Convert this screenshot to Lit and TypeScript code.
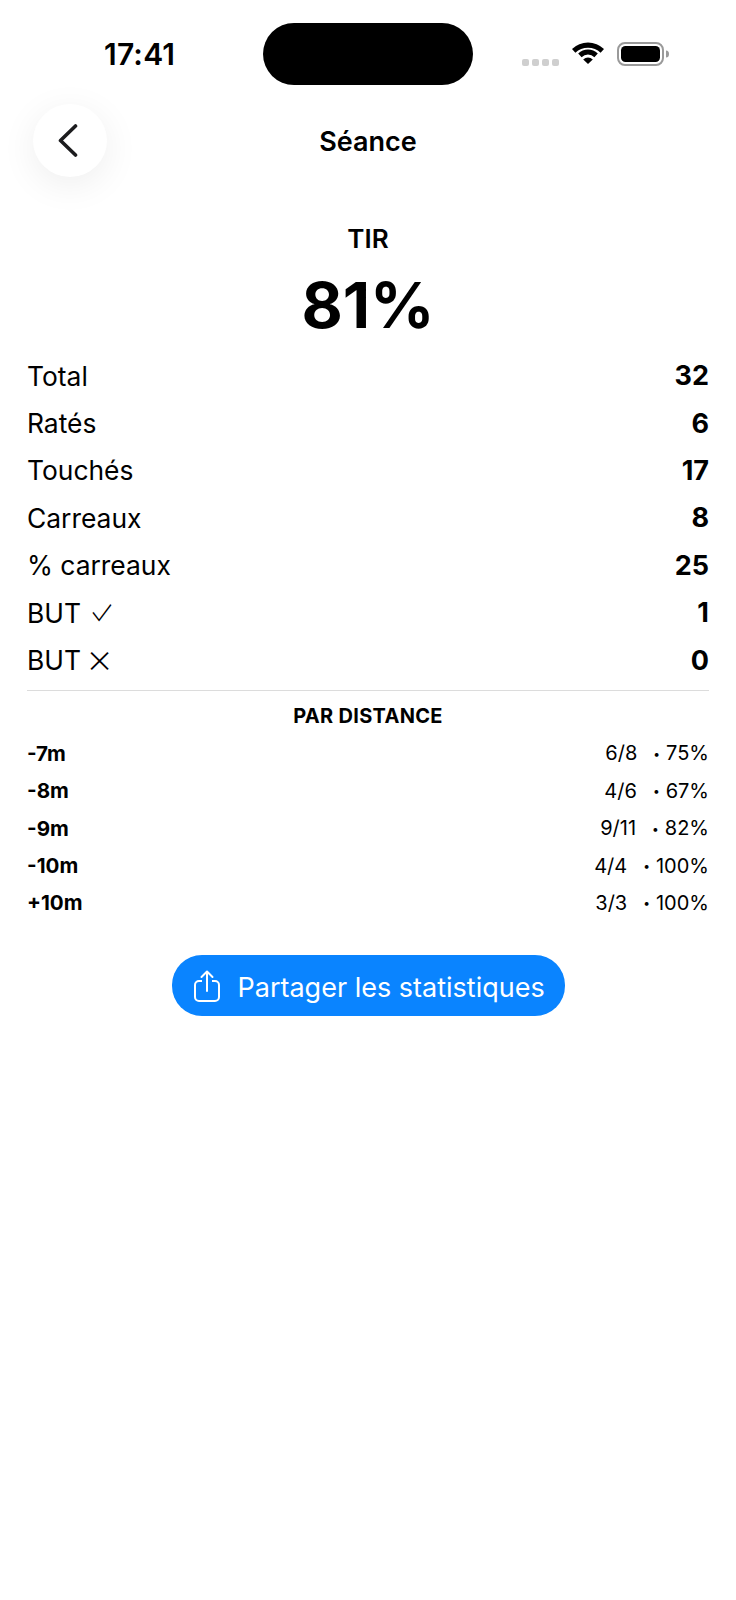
import { LitElement, html, css, svg } from "lit";
import { customElement } from "lit/decorators.js";

const stats: [string, string, string][] = [
  ["Total", "", "32"],
  ["Ratés", "", "6"],
  ["Touchés", "", "17"],
  ["Carreaux", "", "8"],
  ["% carreaux", "", "25"],
  ["BUT ", "✓", "1"],
  ["BUT ", "×", "0"],
];
const dist: [string, string, string][] = [
  ["-7m", "6/8", "75%"],
  ["-8m", "4/6", "67%"],
  ["-9m", "9/11", "82%"],
  ["-10m", "4/4", "100%"],
  ["+10m", "3/3", "100%"],
];

@customElement("app-root")
export class AppRoot extends LitElement {
  static styles = css`
    :host {
      display: block;
      width: 736px;
      height: 1600px;
      background: #fff;
      color: #000;
      font-family: Inter, "Liberation Sans", sans-serif;
      overflow: hidden;
    }
    .status {
      height: 104px;
      box-sizing: border-box;
      padding: 23px 0 0 104px;
      display: flex;
      align-items: flex-start;
    }
    .time {
      flex: none;
      width: 159px;
      height: 62px;
      line-height: 62px;
      font-size: 30px;
      font-weight: 600;
      letter-spacing: 0.2px;
    }
    .island {
      flex: none;
      width: 210px;
      height: 62px;
      border-radius: 31px;
      background: #000;
    }
    .sys {
      flex: none;
      margin-left: 49px;
      display: flex;
      align-items: center;
      height: 62px;
    }
    .sys svg { display: block; }
    .dots { margin-top: 17px; }
    .wifi { margin-left: 12px; margin-top: -5px; }
    .batt { margin-left: 13px; }
    .nav {
      height: 73px;
      margin: 0 33px;
      display: grid;
      grid-template-columns: 74px 1fr 74px;
      align-items: center;
    }
    .back {
      width: 74px;
      height: 73px;
      border-radius: 50%;
      background: #fff;
      box-shadow: 0 8px 36px rgba(0, 0, 0, 0.07);
      display: flex;
      align-items: center;
      justify-content: center;
      padding-right: 5px;
      box-sizing: border-box;
    }
    .title {
      text-align: center;
      font-size: 27px;
      font-weight: 600;
      position: relative;
      top: 1px;
    }
    .tir {
      margin-top: 46px;
      text-align: center;
      font-size: 26px;
      line-height: 32px;
      font-weight: 600;
    }
    .pct {
      margin-top: 10px;
      text-align: center;
      font-size: 63.5px;
      line-height: 80px;
      font-weight: 700;
    }
    .content { margin: 7px 27px 0; }
    .row {
      display: flex;
      justify-content: space-between;
      align-items: center;
      height: 47.4px;
      font-size: 26.4px;
    }
    .row b { font-weight: 700; font-size: 27px; }
    .lab { display: flex; align-items: center; gap: 8px; white-space: pre; }
    .mark {
      display: inline-block;
      font-weight: 200;
      line-height: 0;
    }
    .mark.check { transform: scale(1.08, 1.45) translate(1px, -1px); }
    .mark.cross { font-size: 42px; font-weight: 200; margin-left: -3px; transform: translateY(-2px); }
    .sep {
      height: 1px;
      background: #dcdcdc;
      margin-top: 6px;
    }
    .par {
      margin-top: 12px;
      text-align: center;
      font-size: 20px;
      line-height: 26px;
      font-weight: 700;
      letter-spacing: 0.3px;
    }
    .drows { margin-top: 6px; }
    .drow {
      display: flex;
      justify-content: space-between;
      align-items: center;
      height: 37.4px;
      font-size: 20px;
    }
    .drow b { font-weight: 700; font-size: 20.6px; }
    .right { display: flex; align-items: center; gap: 16px; }
    .dot { font-size: 12px; margin-right: 6px; }
    .val { display: flex; align-items: center; }
    .share {
      margin: 33px auto 0;
      width: 393px;
      height: 61px;
      border-radius: 30px;
      background: #0a84ff;
      color: #fff;
      display: flex;
      align-items: center;
      box-sizing: border-box;
      padding: 2px 0 0 22px;
      gap: 18px;
      font-size: 27px;
    }
    .share svg { display: block; }
    .share span { padding-top: 2px; }
  `;

  render() {
    return html`
      <div class="status">
        <div class="time">17:41</div>
        <div class="island"></div>
        <div class="sys">
          <svg class="dots" width="38" height="8" viewBox="0 0 38 8">
            ${[0, 10, 20, 30].map(
              (x) => svg`<rect x=${x} y="0" width="7" height="7" rx="2" fill="#cfcfcf"/>`
            )}
          </svg>
          <svg class="wifi" width="32" height="24" viewBox="0 0 32 24">
            <path d="M0 9 A23 23 0 0 1 32 9 L28.6 12.8 A18 18 0 0 0 3.4 12.8 Z" fill="#000"/>
            <path d="M6.2 13.6 A14 14 0 0 1 25.8 13.6 L22.4 17.2 A9 9 0 0 0 9.6 17.2 Z" fill="#000"/>
            <path d="M11.2 19.4 A7 7 0 0 1 20.8 19.4 L16 24 Z" fill="#000"/>
          </svg>
          <svg class="batt" width="52" height="25" viewBox="0 0 52 25">
            <rect x="1" y="1" width="45" height="22" rx="7" fill="none" stroke="#9a9a9a" stroke-width="2"/>
            <rect x="4" y="4" width="39" height="16" rx="4.5" fill="#000"/>
            <path d="M49 8.5 a3 3.5 0 0 1 0 7 z" fill="#9a9a9a"/>
          </svg>
        </div>
      </div>
      <div class="nav">
        <div class="back">
          <svg width="20" height="33" viewBox="0 0 20 33">
            <path d="M17.5 2 L2.5 16.5 L17.5 31" fill="none" stroke="#1c1c1e" stroke-width="3.6" stroke-linecap="round" stroke-linejoin="round"/>
          </svg>
        </div>
        <div class="title">Séance</div>
        <div></div>
      </div>
      <div class="tir">TIR</div>
      <div class="pct">81%</div>
      <div class="content">
        ${stats.map(
          ([l, m, v]) => html`<div class="row">
            <span class="lab">${l.trim()}${m
              ? html`<span class="mark ${m === "✓" ? "check" : "cross"}">${m}</span>`
              : ""}</span>
            <b>${v}</b>
          </div>`
        )}
        <div class="sep"></div>
        <div class="par">PAR DISTANCE</div>
        <div class="drows">
          ${dist.map(
            ([l, c, p]) => html`<div class="drow">
              <b>${l}</b>
              <span class="right"><span>${c}</span><span class="val"><span class="dot">•</span>${p}</span></span>
            </div>`
          )}
        </div>
        <div class="share">
          <svg width="26" height="32" viewBox="0 0 26 32">
            <path d="M8 11 H5 a4 4 0 0 0 -4 4 V27 a4 4 0 0 0 4 4 H21 a4 4 0 0 0 4 -4 V15 a4 4 0 0 0 -4 -4 H18" fill="none" stroke="#fff" stroke-width="2"/>
            <path d="M13 21 V2 M7.5 7 L13 1.5 L18.5 7" fill="none" stroke="#fff" stroke-width="2" stroke-linecap="round" stroke-linejoin="round"/>
          </svg>
          <span>Partager les statistiques</span>
        </div>
      </div>
    `;
  }
}
